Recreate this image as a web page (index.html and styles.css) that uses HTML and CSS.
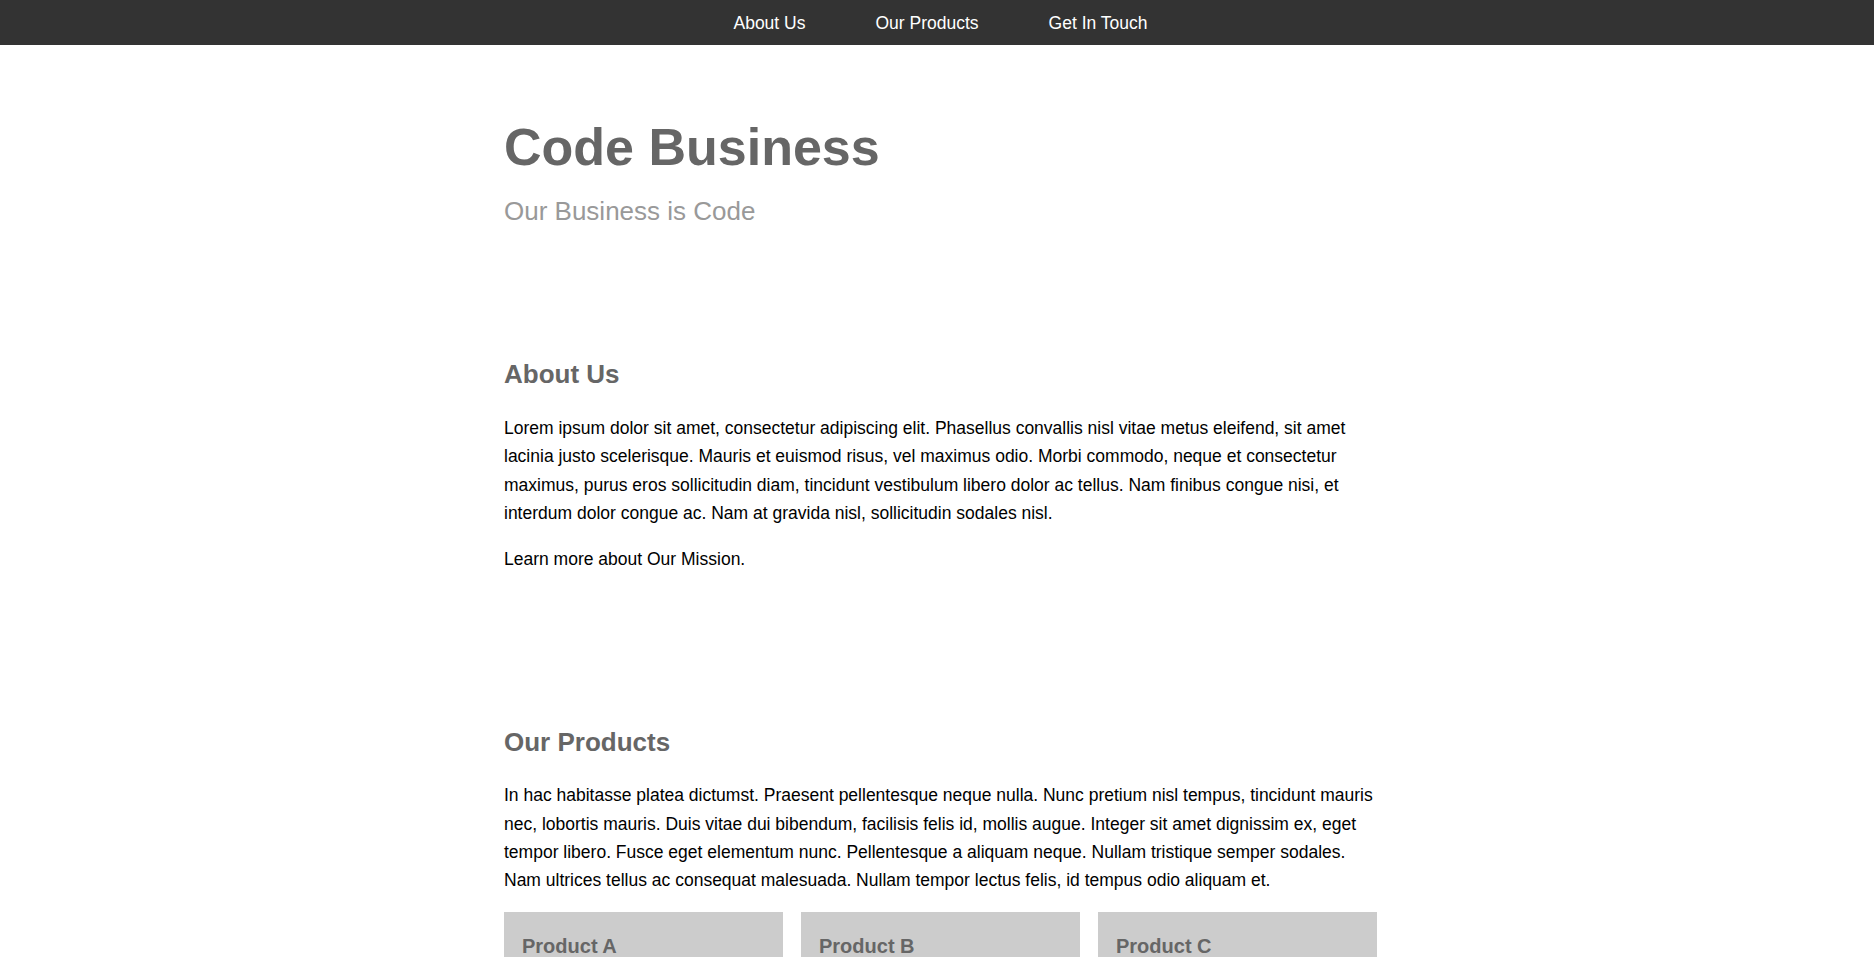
FILE: index.html
```html
<!DOCTYPE html>
<html lang="en">
<head>
<meta charset="utf-8">
<title>Code Business</title>
<link rel="stylesheet" href="styles.css">
</head>
<body>
<nav class="topnav">
  <a class="topnav-link" href="#about">About Us</a>
  <a class="topnav-link" href="#products">Our Products</a>
  <a class="topnav-link" href="#contact">Get In Touch</a>
</nav>
<main class="container">
  <header class="hero">
    <h1 class="hero-title">Code Business</h1>
    <p class="hero-tagline">Our Business is Code</p>
  </header>
  <section class="section section-about" id="about">
    <h2 class="section-title">About Us</h2>
    <p class="text">Lorem ipsum dolor sit amet, consectetur adipiscing elit. Phasellus convallis nisl vitae metus eleifend, sit amet lacinia justo scelerisque. Mauris et euismod risus, vel maximus odio. Morbi commodo, neque et consectetur maximus, purus eros sollicitudin diam, tincidunt vestibulum libero dolor ac tellus. Nam finibus congue nisi, et interdum dolor congue ac. Nam at gravida nisl, sollicitudin sodales nisl.</p>
    <p class="text text-more">Learn more about Our Mission.</p>
  </section>
  <section class="section section-products" id="products">
    <h2 class="section-title">Our Products</h2>
    <p class="text">In hac habitasse platea dictumst. Praesent pellentesque neque nulla. Nunc pretium nisl tempus, tincidunt mauris nec, lobortis mauris. Duis vitae dui bibendum, facilisis felis id, mollis augue. Integer sit amet dignissim ex, eget tempor libero. Fusce eget elementum nunc. Pellentesque a aliquam neque. Nullam tristique semper sodales. Nam ultrices tellus ac consequat malesuada. Nullam tempor lectus felis, id tempus odio aliquam et.</p>
    <div class="products">
      <div class="product"><h3 class="product-title">Product A</h3></div>
      <div class="product"><h3 class="product-title">Product B</h3></div>
      <div class="product"><h3 class="product-title">Product C</h3></div>
    </div>
  </section>
</main>
</body>
</html>
```
FILE: styles.css
```css
html, body {
  margin: 0;
  padding: 0;
  background: #fff;
}

body {
  font-family: "Liberation Sans", Arial, Helvetica, sans-serif;
  color: #000;
}

.topnav {
  height: 45px;
  background: #333;
  display: flex;
  justify-content: center;
  align-items: center;
  padding-left: 7px;
}

.topnav-link {
  color: #fff;
  text-decoration: none;
  font-size: 17.5px;
  line-height: 20px;
  padding: 0 35px;
}

.container {
  width: 880px;
  box-sizing: border-box;
  padding-left: 7px;
  margin: 0 auto;
}

.hero {
  padding-top: 71px;
}

.hero-title {
  margin: 0;
  font-size: 52px;
  line-height: 62px;
  font-weight: bold;
  color: #666;
}

.hero-tagline {
  margin: 18px 0 0;
  font-size: 26px;
  line-height: 31px;
  color: #999;
}

.section-about {
  margin-top: 132px;
}

.section-products {
  margin-top: 154px;
}

.section-title {
  margin: 0;
  font-size: 26px;
  line-height: 31px;
  font-weight: bold;
  color: #666;
}

.text {
  margin: 24px 0 0;
  font-size: 17.5px;
  line-height: 28.3px;
}

.section-products .text {
  margin-top: 23px;
}

.text-more {
  margin-top: 18px;
}

.products {
  margin-top: 17px;
  display: grid;
  grid-template-columns: repeat(3, 1fr);
  gap: 18px;
}

.product {
  background: #ccc;
  padding: 22px 18px 30px;
}

.product-title {
  margin: 0;
  font-size: 20px;
  line-height: 24px;
  font-weight: bold;
  color: #666;
}
```
